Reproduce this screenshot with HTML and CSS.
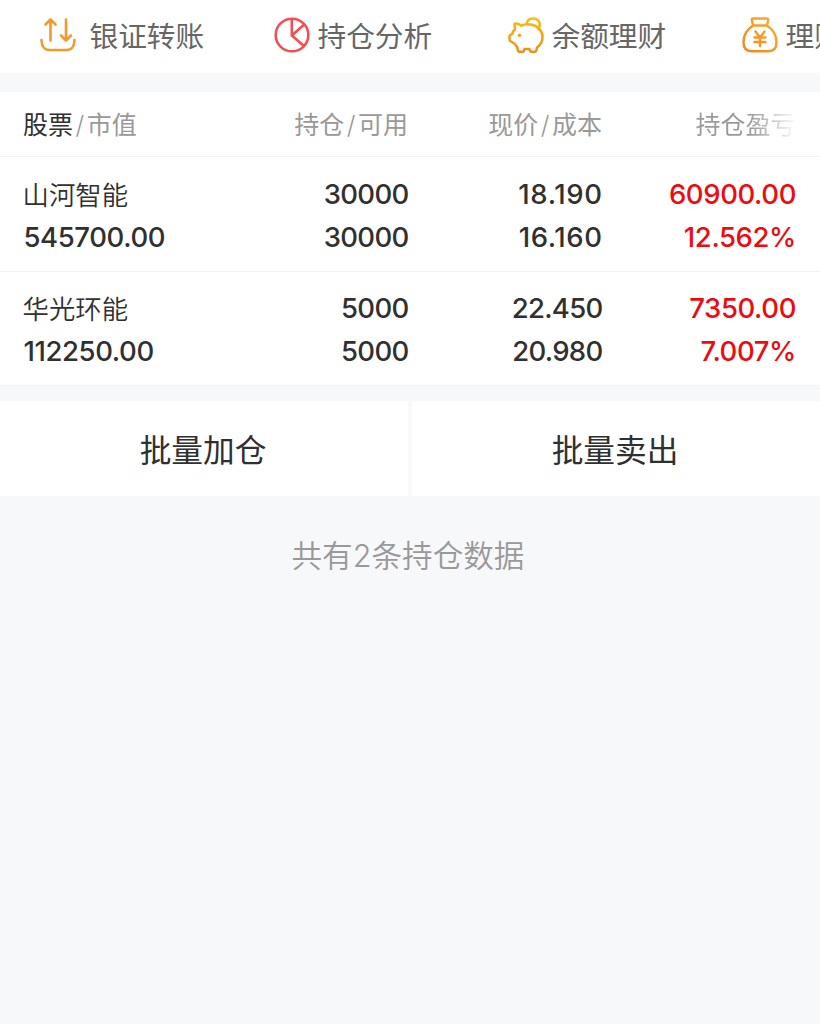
FILE: index.html
```
<!DOCTYPE html>
<html lang="zh-CN">
<head>
    <meta charset="UTF-8">
    <meta name="viewport" content="width=device-width, initial-scale=1.0">
    <title>持仓</title>
    <link rel="stylesheet" href="styles.css">
</head>
<body>
    <nav class="shortcuts">
        <a class="shortcut">
            <svg class="icon" viewBox="0 0 36 36" fill="none" stroke="#f29a2e" stroke-width="2.6" stroke-linecap="round" stroke-linejoin="round">
                <path d="M10.500 23.500V2.500M5.500 7.500l5-5 5 5M26 2.500v21M21 18.500l5 5 5-5"/>
                <path d="M1.500 23c0 6 3 10 8 10h17c5 0 8-4 8-10"/>
            </svg>
            <span>银证转账</span>
        </a>
        <a class="shortcut">
            <svg class="icon" viewBox="0 0 36 36" fill="none" stroke="#fb4a4e" stroke-width="2.5" stroke-linejoin="round">
                <circle cx="18" cy="18" r="16.3"/>
                <path d="M17.800 1.700V18.500L30.200 7.500M17.800 18.500L30 29"/>
            </svg>
            <span>持仓分析</span>
        </a>
        <a class="shortcut">
            <svg class="icon" viewBox="0 0 36 36" fill="none" stroke="url(#pig)" stroke-width="2.5" stroke-linecap="round" stroke-linejoin="round">
                <defs>
                    <linearGradient id="pig" gradientUnits="userSpaceOnUse" x1="0" y1="0" x2="0" y2="36">
                        <stop offset="0" stop-color="#fdbb10"/>
                        <stop offset="1" stop-color="#f28c16"/>
                    </linearGradient>
                </defs>
                <path d="M6.500 6.800c2.500-.5 5 .2 6.500 2 2.500-1.300 6-1.800 9.500-1.300 7 1 12 5.800 12 12.500 0 4.500-2 8-5.500 10.500l-.8 3.200c-.2.800-.7 1.100-1.500 1.100h-3.200c-.8 0-1.300-.4-1.500-1.100l-.5-1.700h-5l-.5 1.700c-.2.700-.7 1.100-1.500 1.100h-3c-.8 0-1.300-.4-1.500-1.100L9 29.500c-1.500-1.200-2.200-2.700-3.500-3.500L2.300 24c-.5-.4-.8-.9-.8-1.500v-3.200c0-.8.300-1.200 1-1.500l1.800-1c.5-2 1.500-3.500 2.700-4.500z"/>
                <path d="M18.500 7c.5-3.500 3-5.600 6.500-5.600 4 0 6.700 2.800 6.700 6.500 0 1.800-.4 3-1.200 4.200"/>
                <circle cx="11.500" cy="18.300" r="1.700" fill="#f7a313" stroke="none"/>
            </svg>
            <span>余额理财</span>
        </a>
        <a class="shortcut">
            <svg class="icon" viewBox="0 0 36 36" fill="none" stroke="url(#bag)" stroke-width="2.4" stroke-linecap="round" stroke-linejoin="round">
                <defs>
                    <linearGradient id="bag" gradientUnits="userSpaceOnUse" x1="0" y1="36" x2="36" y2="0">
                        <stop offset="0" stop-color="#f58220"/>
                        <stop offset="1" stop-color="#fbb02c"/>
                    </linearGradient>
                </defs>
                <path d="M11 8.500L9.800 3C9.600 2 10 1.500 11 1.500h14c1 0 1.400.5 1.200 1.500L25 8.500z"/>
                <path d="M11 8.500C5 12.500 1.500 18.500 1.500 25c0 6 2.500 9.300 8 9.300h17c5.500 0 8-3.300 8-9.300 0-6.500-3.500-12.500-9.500-16.500"/>
                <path d="M13.500 14.500l4.500 6 4.500-6M12.500 20.500h11M12.500 25h11M18 20.500v8.500"/>
            </svg>
            <span>理财</span>
        </a>
    </nav>

    <section class="positions">
        <div class="row head">
            <div><b>股票</b><i>/</i>市值</div>
            <div>持仓<i>/</i>可用</div>
            <div>现价<i>/</i>成本</div>
            <div class="fade">持仓盈亏</div>
        </div>
        <div class="row stock">
            <div><span class="name">山河智能</span><span>545700.00</span></div>
            <div class="amount"><span>30000</span><span>30000</span></div>
            <div class="loose"><span>18.190</span><span>16.160</span></div>
            <div class="up"><span>60900.00</span><span>12.562%</span></div>
        </div>
        <div class="row stock">
            <div><span class="name">华光环能</span><span>112250.00</span></div>
            <div class="amount"><span>5000</span><span>5000</span></div>
            <div class="amount"><span>22.450</span><span>20.980</span></div>
            <div class="up"><span>7350.00</span><span>7.007%</span></div>
        </div>
    </section>

    <div class="actions">
        <button>批量加仓</button>
        <button>批量卖出</button>
    </div>

    <p class="summary">共有2条持仓数据</p>
</body>
</html>
```
FILE: styles.css
```
* {
    box-sizing: border-box;
    margin: 0;
    padding: 0;
}

body {
    background-color: #f7f8fa;
    color: #303030;
    font-family: Inter, "Noto Sans CJK SC", sans-serif;
    overflow: hidden;
}

.shortcuts {
    display: flex;
    height: 73px;
    padding-left: 40px;
    background-color: white;
    overflow: hidden;
}

.shortcut {
    display: flex;
    flex: 0 0 234px;
    align-items: center;
    height: 70px;
    font-size: 28.7px;
    color: #666;
    white-space: nowrap;
}

.shortcut span {
    padding-bottom: 2px;
}

.icon {
    flex: none;
    width: 36px;
    height: 36px;
    margin-right: 7.5px;
}

.shortcut:first-child .icon {
    margin-right: 13.5px;
}

.positions {
    margin-top: 19px;
    background-color: white;
}

.row {
    display: grid;
    grid-template-columns: 200px 185px 194px 193.5px;
    padding-left: 23.5px;
    text-align: right;
    border-bottom: 1px solid #f1f2f3;
}

.row div:first-child {
    text-align: left;
}

.head {
    height: 65px;
    padding-left: 23px;
    line-height: 67px;
    font-size: 25px;
    color: #999;
}

.head b {
    font-weight: 400;
    color: #303030;
}

.head i {
    font-style: normal;
    font-weight: 300;
    margin: 0 2.5px;
}

.fade {
    background: linear-gradient(to right, #999 76%, #f4f4f4 98%);
    -webkit-background-clip: text;
    background-clip: text;
    color: transparent;
}

.stock {
    height: 115px;
    padding-top: 16px;
    font-size: 27.5px;
    font-weight: 550;
    letter-spacing: -0.4px;
}

.stock + .stock {
    height: 114px;
    padding-top: 15px;
}

.stock span {
    display: block;
    height: 43px;
    line-height: 43px;
}

.stock .name {
    margin-left: -1px;
    padding-top: 1px;
    font-size: 26.4px;
    font-weight: 350;
    letter-spacing: 0;
}

.stock .amount {
    letter-spacing: -0.7px;
}

.stock .loose {
    letter-spacing: 0.6px;
}

.up {
    color: #ee0a0e;
}

.actions {
    display: grid;
    grid-template-columns: 408px 408px;
    gap: 4px;
    height: 95px;
    margin-top: 15px;
}

.actions button {
    padding: 0 2px 1px 0;
    border: none;
    background-color: white;
    font-family: inherit;
    font-size: 31.7px;
    color: #303030;
}

.summary {
    margin-top: 37px;
    padding-right: 4px;
    font-size: 30.6px;
    font-weight: 350;
    line-height: 45px;
    text-align: center;
    color: #999;
}
```
